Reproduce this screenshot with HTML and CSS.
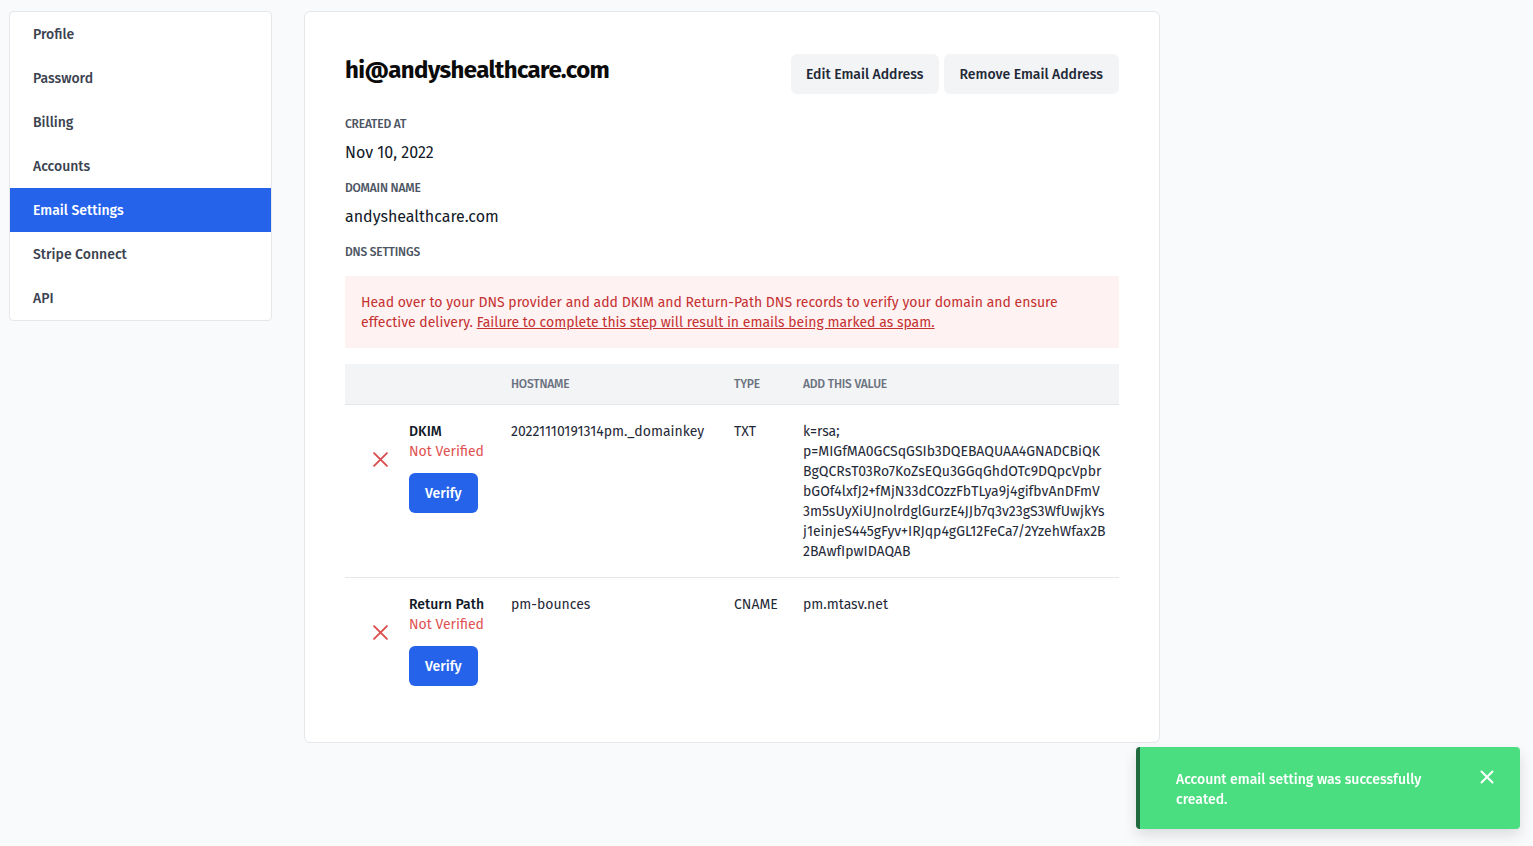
FILE: index.html
```html
<!DOCTYPE html>
<html lang="en">
<head>
    <meta charset="UTF-8">
    <meta name="viewport" content="width=device-width, initial-scale=1.0">
    <title>Email Settings</title>
    <link rel="stylesheet" href="styles.css">
</head>
<body>
    <div class="layout">
        <nav class="sidebar">
            <a href="#" class="nav-item">Profile</a>
            <a href="#" class="nav-item">Password</a>
            <a href="#" class="nav-item">Billing</a>
            <a href="#" class="nav-item">Accounts</a>
            <a href="#" class="nav-item active">Email Settings</a>
            <a href="#" class="nav-item">Stripe Connect</a>
            <a href="#" class="nav-item">API</a>
        </nav>

        <main class="card">
            <div class="card-header">
                <h1 class="title">hi@andyshealthcare.com</h1>
                <div class="actions">
                    <button class="btn-light">Edit Email Address</button>
                    <button class="btn-light">Remove Email Address</button>
                </div>
            </div>

            <div class="field-label">Created At</div>
            <div class="field-value">Nov 10, 2022</div>

            <div class="field-label">Domain Name</div>
            <div class="field-value">andyshealthcare.com</div>

            <div class="field-label">DNS Settings</div>

            <div class="alert">
                Head over to your DNS provider and add DKIM and Return-Path DNS records to verify your domain and ensure
                effective delivery. <a href="#">Failure to complete this step will result in emails being marked as spam.</a>
            </div>

            <table class="dns-table">
                <colgroup>
                    <col class="c-icon">
                    <col class="c-name">
                    <col class="c-host">
                    <col class="c-type">
                    <col class="c-value">
                </colgroup>
                <thead>
                    <tr>
                        <th></th>
                        <th></th>
                        <th>Hostname</th>
                        <th>Type</th>
                        <th>Add This Value</th>
                    </tr>
                </thead>
                <tbody>
                    <tr>
                        <td class="icon-cell">
                            <svg class="x-icon" viewBox="0 0 14 14" width="15" height="15"><path d="M1 1L13 13M13 1L1 13" stroke="currentColor" stroke-width="1.7" stroke-linecap="round"/></svg>
                        </td>
                        <td>
                            <div class="rec-name">DKIM</div>
                            <div class="rec-status">Not Verified</div>
                            <button class="btn-primary">Verify</button>
                        </td>
                        <td>20221110191314pm._domainkey</td>
                        <td>TXT</td>
                        <td class="value-cell">k=rsa;<br>p=MIGfMA0GCSqGSIb3DQEBAQUAA4GNADCBiQK<br>BgQCRsT03Ro7KoZsEQu3GGqGhdOTc9DQpcVpbr<br>bGOf4lxfJ2+fMjN33dCOzzFbTLya9j4gifbvAnDFmV<br>3m5sUyXiUJnolrdglGurzE4JJb7q3v23gS3WfUwjkYs<br>j1einjeS445gFyv+IRJqp4gGL12FeCa7/2YzehWfax2B<br>2BAwfIpwIDAQAB</td>
                    </tr>
                    <tr>
                        <td class="icon-cell">
                            <svg class="x-icon" viewBox="0 0 14 14" width="15" height="15"><path d="M1 1L13 13M13 1L1 13" stroke="currentColor" stroke-width="1.7" stroke-linecap="round"/></svg>
                        </td>
                        <td>
                            <div class="rec-name">Return Path</div>
                            <div class="rec-status">Not Verified</div>
                            <button class="btn-primary">Verify</button>
                        </td>
                        <td>pm-bounces</td>
                        <td>CNAME</td>
                        <td class="value-cell">pm.mtasv.net</td>
                    </tr>
                </tbody>
            </table>
        </main>
    </div>

    <div class="toast">
        <p>Account email setting was successfully created.</p>
        <button class="toast-close" aria-label="Close">
            <svg viewBox="0 0 14 14" width="14" height="14"><path d="M1.5 1.5L12.5 12.5M12.5 1.5L1.5 12.5" stroke="currentColor" stroke-width="2" stroke-linecap="round"/></svg>
        </button>
    </div>
</body>
</html>
```

FILE: styles.css
```css
body {
    margin: 0;
    background-color: #f9fafb;
    color: #111827;
    font-family: "Fira Sans", Roboto, sans-serif;
    font-size: 14px;
}
.layout {
    display: grid;
    grid-template-columns: 263px 856px;
    gap: 32px;
    align-items: start;
    padding: 11px 0 40px 9px;
}
.sidebar {
    display: flex;
    flex-direction: column;
    background-color: #ffffff;
    border: 1px solid #e5e7eb;
    border-radius: 4px;
}
.nav-item {
    display: block;
    padding: 13px 24px 11px 23px;
    line-height: 20px;
    color: #3b4250;
    font-weight: 500;
    text-decoration: none;
}
.nav-item.active {
    background-color: #2563eb;
    color: #ffffff;
}
.card {
    background-color: #ffffff;
    border: 1px solid #e5e7eb;
    border-radius: 6px;
    padding: 40px 40px 41px;
}
.card-header {
    display: flex;
    justify-content: space-between;
    align-items: flex-start;
    margin-bottom: 22px;
}
.title {
    margin: 1px 0 0;
    font-size: 24px;
    line-height: 34px;
    font-weight: 700;
    letter-spacing: -0.6px;
    color: #0b0b0b;
}
.actions {
    display: flex;
    gap: 5px;
    margin-top: 2px;
}
.btn-light {
    height: 40px;
    padding: 0 16px 0 15px;
    border: none;
    border-radius: 6px;
    background-color: #f3f4f6;
    color: #1f2937;
    font-family: inherit;
    font-size: 14px;
    font-weight: 500;
    cursor: pointer;
}
.field-label {
    font-size: 12px;
    line-height: 16px;
    font-weight: 500;
    text-transform: uppercase;
    letter-spacing: -0.2px;
    color: #4b5563;
    margin-bottom: 9px;
}
.field-value {
    font-size: 16px;
    line-height: 24px;
    margin-bottom: 15px;
}
.alert {
    margin-top: 16px;
    padding: 17px 16px 15px;
    background-color: #fef2f2;
    color: #c53030;
    line-height: 20px;
    border-radius: 2px;
}
.alert a {
    color: inherit;
}
.dns-table {
    width: 100%;
    margin-top: 16px;
    border-collapse: collapse;
    table-layout: fixed;
}
.c-icon { width: 52px; }
.c-name { width: 102px; }
.c-host { width: 223px; }
.c-type { width: 69px; }
.dns-table th {
    height: 40px;
    padding: 0 12px;
    background-color: #f3f4f6;
    border-bottom: 1px solid #e5e7eb;
    text-align: left;
    font-size: 12px;
    font-weight: 500;
    text-transform: uppercase;
    letter-spacing: -0.2px;
    color: #6b7280;
}
.dns-table td {
    padding: 17px 12px 15px;
    vertical-align: top;
    line-height: 20px;
    color: #1f2937;
}
.dns-table tbody tr + tr td {
    border-top: 1px solid #e5e7eb;
}
.dns-table td.icon-cell {
    padding: 47px 0 0 28px;
    color: #dc4b4b;
}
.x-icon {
    display: block;
}
.rec-name {
    font-weight: 500;
    color: #111827;
}
.rec-status {
    color: #e05252;
}
.btn-primary {
    margin-top: 11px;
    height: 40px;
    padding: 0 16px;
    border: none;
    border-radius: 6px;
    background-color: #2563eb;
    color: #ffffff;
    font-family: inherit;
    font-size: 14px;
    font-weight: 500;
    cursor: pointer;
}
.value-cell {
    white-space: nowrap;
}
.toast {
    position: fixed;
    right: 13px;
    bottom: 17px;
    width: 384px;
    height: 82px;
    box-sizing: border-box;
    display: flex;
    align-items: flex-start;
    padding: 23px 26px 0 36px;
    background-color: #4ade80;
    border-left: 4px solid #1f6b3e;
    border-radius: 4px;
    box-shadow: 0 6px 14px rgba(0, 0, 0, 0.12);
}
.toast p {
    flex: 1;
    margin: 0;
    color: #ffffff;
    font-weight: 500;
    line-height: 20px;
    padding-right: 40px;
}
.toast-close {
    background: none;
    border: none;
    padding: 0;
    color: #ffffff;
    cursor: pointer;
}
.toast-close svg {
    display: block;
}
```
